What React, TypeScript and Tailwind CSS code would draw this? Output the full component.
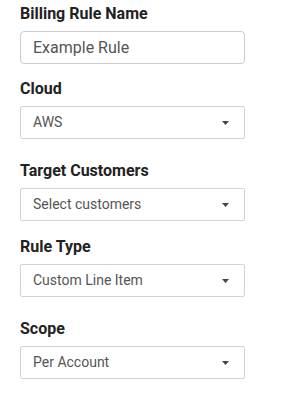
const fields = [
  { label: 'Cloud', value: 'AWS', gap: 'mt-[15px]' },
  { label: 'Target Customers', value: 'Select customers', gap: 'mt-[22px]' },
  { label: 'Rule Type', value: 'Custom Line Item', gap: 'mt-[16px]' },
  { label: 'Scope', value: 'Per Account', gap: 'mt-[22px]' },
];

function Caret() {
  return (
    <svg width="7" height="4" viewBox="0 0 7 4" className="shrink-0">
      <path d="M0 0h7L3.5 4z" fill="#444" />
    </svg>
  );
}

export default function App() {
  return (
    <div className="w-[298px] h-[401px] bg-white pt-[4px] px-[20px] font-['Roboto',sans-serif]">
      <div>
        <label className="block text-[16px] leading-[20px] font-bold text-[#222]">Billing Rule Name</label>
        <div className="mt-[7px] h-[33px] w-[225px] rounded-[4px] border border-[#ccc] flex items-center px-[12px] text-[16px] text-[#555]">
          Example Rule
        </div>
      </div>

      {fields.map((f) => (
        <div key={f.label} className={f.gap}>
          <label className="block text-[16px] leading-[20px] font-bold text-[#222]">{f.label}</label>
          <div className="mt-[7px] h-[33px] w-[225px] rounded-[2px] border border-[#d3d3d3] flex items-center justify-between pl-[12px] pr-[15px] text-[14px] text-[#555]">
            <span>{f.value}</span>
            <Caret />
          </div>
        </div>
      ))}
    </div>
  );
}
